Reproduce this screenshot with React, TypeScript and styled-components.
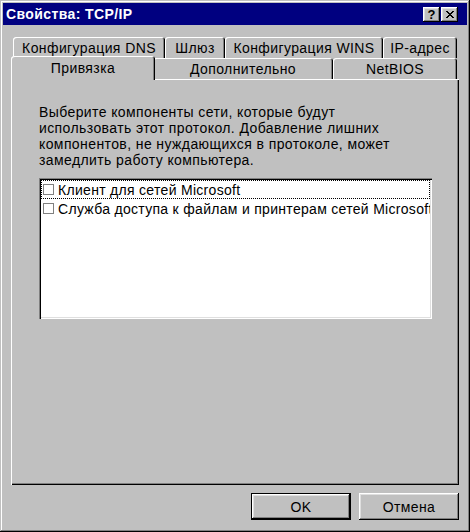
import React from "react";
import styled, { createGlobalStyle } from "styled-components";

const GlobalStyle = createGlobalStyle`
  body {
    margin: 0;
    background: #c0c0c0;
    font-family: "Liberation Sans", Arial, sans-serif;
    letter-spacing: 0.4px;
  }
`;

const Window = styled.div`
  width: 470px;
  height: 532px;
  box-sizing: border-box;
  padding: 3px;
  background: #c0c0c0;
  box-shadow: inset -1px -1px #000, inset 1px 1px #c0c0c0, inset -2px -2px #808080,
    inset 2px 2px #fff;
  display: flex;
  flex-direction: column;
`;

const TitleBar = styled.div`
  height: 22px;
  background: #000080;
  display: flex;
  align-items: center;
  padding: 0 9px 0 3px;
`;

const TitleText = styled.div`
  flex: 1;
  color: #fff;
  font-weight: bold;
  font-size: 14px;
`;

const TitleButton = styled.div<{ $gap?: number }>`
  width: 17px;
  height: 15px;
  margin-left: ${p => p.$gap || 0}px;
  background: #c0c0c0;
  box-shadow: inset -1px -1px #000, inset 1px 1px #fff, inset -2px -2px #808080,
    inset 2px 2px #dfdfdf;
  display: flex;
  align-items: center;
  justify-content: center;
  font-weight: bold;
  font-size: 13px;
  letter-spacing: 0;
  color: #000;
`;

const Body = styled.div`
  flex: 1;
  display: flex;
  flex-direction: column;
  padding: 12px 8px 0;
`;

const TabRow = styled.div`
  display: flex;
  height: 21px;
  padding: 0 2px;
  position: relative;
`;

const Tab = styled.div<{ $w: number; $active?: boolean }>`
  width: ${p => p.$w + (p.$active ? 4 : 0)}px;
  height: ${p => (p.$active ? 24 : 21)}px;
  margin: ${p => (p.$active ? "-2px -2px 0" : "0")};
  box-sizing: border-box;
  flex-shrink: 0;
  background: #c0c0c0;
  border-radius: 3px 3px 0 0;
  box-shadow: inset 1px 1px #fff, inset -1px 0 #000, inset -2px 0 #808080;
  display: flex;
  align-items: center;
  justify-content: center;
  padding-top: ${p => (p.$active ? 0 : 1)}px;
  font-size: 14px;
  color: #000;
  position: relative;
  z-index: ${p => (p.$active ? 2 : 1)};
`;

const Panel = styled.div`
  height: 406px;
  box-sizing: border-box;
  padding: 25px 0 0 28px;
  box-shadow: inset 1px 1px #fff, inset -1px -1px #000, inset -2px -2px #808080;
`;

const Description = styled.div`
  font-size: 14px;
  line-height: 16px;
  color: #000;
  white-space: nowrap;
`;

const ListBox = styled.div`
  width: 393px;
  height: 141px;
  margin-top: 10px;
  box-sizing: border-box;
  padding: 2px;
  background: #fff;
  box-shadow: inset 1px 1px #808080, inset 2px 2px #000, inset -1px -1px #fff,
    inset -2px -2px #dfdfdf;
  overflow: hidden;
`;

const ListRow = styled.div<{ $focused?: boolean }>`
  height: 19px;
  box-sizing: border-box;
  display: flex;
  align-items: center;
  gap: 4px;
  padding-left: 2px;
  outline: ${p => (p.$focused ? "1px dotted #000" : "none")};
  outline-offset: -1px;
  font-size: 14px;
  letter-spacing: 0.3px;
  white-space: nowrap;
  overflow: hidden;
`;

const CheckBox = styled.span`
  width: 11px;
  height: 11px;
  box-sizing: border-box;
  border: 1px solid #808080;
  background: #fff;
  flex-shrink: 0;
`;

const ButtonRow = styled.div`
  display: flex;
  justify-content: flex-end;
  gap: 8px;
  margin-top: 8px;
`;

const Button = styled.button<{ $default?: boolean }>`
  width: 100px;
  height: 27px;
  box-sizing: border-box;
  border: ${p => (p.$default ? "1px solid #000" : "none")};
  background: #c0c0c0;
  box-shadow: inset -1px -1px #000, inset 1px 1px #fff, inset -2px -2px #808080,
    inset 2px 2px #dfdfdf;
  font-family: "Liberation Sans", Arial, sans-serif;
  font-size: 14px;
  letter-spacing: 0.4px;
  color: #000;
  padding: 0;
`;

const CloseIcon = () => (
  <svg width="8" height="7" viewBox="0 0 8 7" shapeRendering="crispEdges">
    <path d="M0 0h2v1H0zM6 0h2v1H6zM1 1h2v1H1zM5 1h2v1H5zM2 2h4v1H2zM3 3h2v1H3zM2 4h4v1H2zM1 5h2v1H1zM5 5h2v1H5zM0 6h2v1H0zM6 6h2v1H6z" fill="#000" />
  </svg>
);

const backTabs = [
  { label: "Конфигурация DNS", w: 152 },
  { label: "Шлюз", w: 60 },
  { label: "Конфигурация WINS", w: 158 },
  { label: "IP-адрес", w: 74 },
];

const frontTabs = [
  { label: "Привязка", w: 140, active: true },
  { label: "Дополнительно", w: 180 },
  { label: "NetBIOS", w: 124 },
];

const components = [
  "Клиент для сетей Microsoft",
  "Служба доступа к файлам и принтерам сетей Microsoft",
];

export default () => {
  return (
    <>
      <GlobalStyle />
      <Window>
        <TitleBar>
          <TitleText>Свойства: TCP/IP</TitleText>
          <TitleButton>?</TitleButton>
          <TitleButton $gap={1}>
            <CloseIcon />
          </TitleButton>
        </TitleBar>
        <Body>
          <TabRow>
            {backTabs.map(t => (
              <Tab key={t.label} $w={t.w}>
                {t.label}
              </Tab>
            ))}
          </TabRow>
          <TabRow>
            {frontTabs.map(t => (
              <Tab key={t.label} $w={t.w} $active={t.active}>
                {t.label}
              </Tab>
            ))}
          </TabRow>
          <Panel>
            <Description>
              Выберите компоненты сети, которые будут
              <br />
              использовать этот протокол. Добавление лишних
              <br />
              компонентов, не нуждающихся в протоколе, может
              <br />
              замедлить работу компьютера.
            </Description>
            <ListBox>
              {components.map((c, i) => (
                <ListRow key={c} $focused={i === 0}>
                  <CheckBox />
                  {c}
                </ListRow>
              ))}
            </ListBox>
          </Panel>
          <ButtonRow>
            <Button $default>OK</Button>
            <Button>Отмена</Button>
          </ButtonRow>
        </Body>
      </Window>
    </>
  );
};
